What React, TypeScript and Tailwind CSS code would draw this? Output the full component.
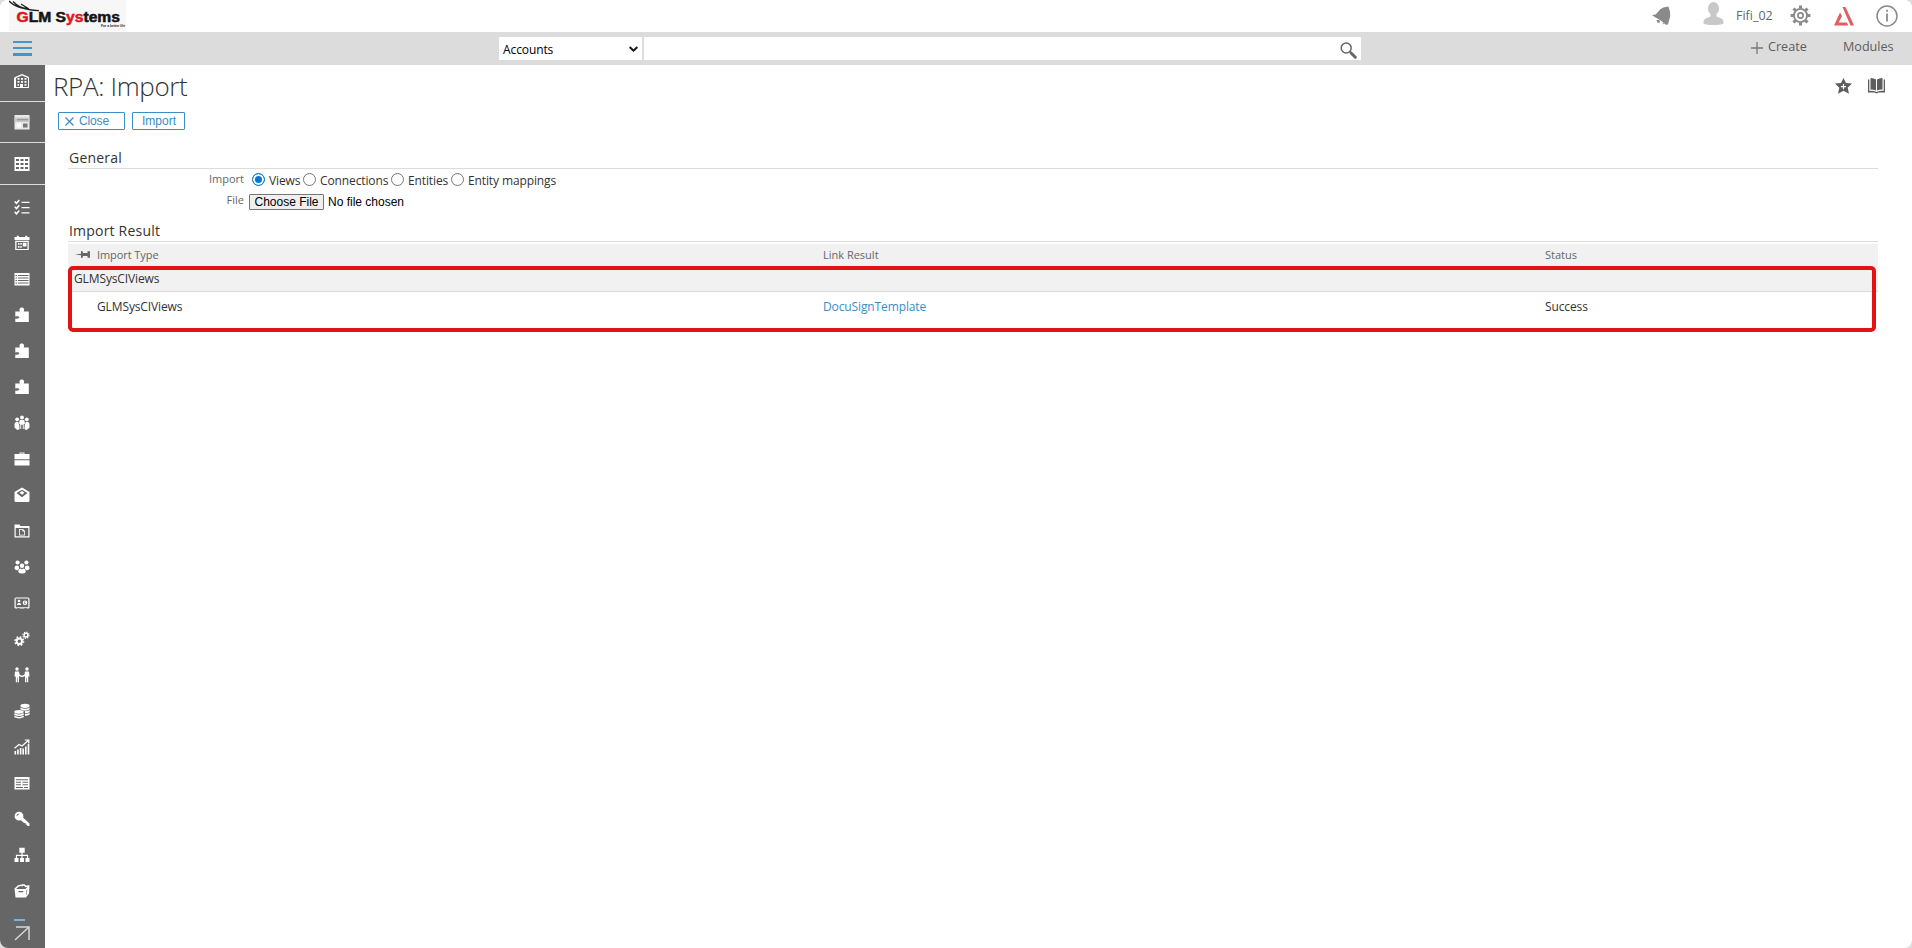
import { useState, ReactNode } from "react";

type IconProps = { children: ReactNode };

function SideIcon({ children }: IconProps) {
  return (
    <svg className="h-4 w-4 shrink-0 text-white" viewBox="0 0 16 16" fill="currentColor">
      {children}
    </svg>
  );
}

const puzzle = (
  <path d="M1.300 4.500h4.700c-1-1.500-.5-4 1.800-4s2.800 2.500 1.800 4h5.200V15H1.300v-3.600c1.500.8 4 .2 4-1.100S2.800 8.800 1.300 9.600z" />
);

// First three entries sit in their own separated cells
const topItems: { name: string; cell: string; icon: ReactNode }[] = [
  {
    name: "Building",
    cell: "h-[37px] pt-[8px]",
    icon: (
      <path
        fillRule="evenodd"
        d="M1 4l7-3 7 3v11H0V5zM2 5v9h4v-3h3v3h5V5L8 2.400zM3.500 5h2v1.700h-2zM7 5h2v1.700H7zM10.500 5h2v1.700h-2zM3.500 8h2v1.700h-2zM7 8h2v1.700H7zM10.500 8h2v1.700h-2zM3.500 11h1.500v1.700H3.500zM10.500 11h2v1.700h-2z"
      />
    ),
  },
  {
    name: "Dashboard",
    cell: "h-[41px] pt-[12px]",
    icon: (
      <>
        <path d="M0.500 1h15v14.500H.5z" fill="#e9e9e9" />
        <path d="M.5 3.500h15v4.500H.5z" fill="#c9c9c9" />
        <path d="M3 5.200h11v1H3z" fill="#888" />
        <path d="M2.500 9.500h4.500v4H2.500z" fill="#fff" />
        <path d="M9 9.500h4.500v4H9z" fill="#777" />
      </>
    ),
  },
  {
    name: "Grid",
    cell: "h-[42px] pt-[13px]",
    icon: (
      <path
        fillRule="evenodd"
        d="M.5 1h15v14H.5zM2 3v2h3V3zM6.500 3v2h3V3zM11 3v2h3V3zM2 7v2h3V7zM6.500 7v2h3V7zM11 7v2h3V7zM2 11v2h3v-2zM6.500 11v2h3v-2zM11 11v2h3v-2z"
      />
    ),
  },
];

const items: { name: string; icon: ReactNode }[] = [
  {
    name: "Tasks",
    icon: (
      <>
        <path
          d="M.7 2.500l1.800 1.800L5.300 1M.7 7.700l1.800 1.800 2.800-3.300M.7 12.900l1.800 1.800 2.800-3.300"
          fill="none"
          stroke="currentColor"
          strokeWidth="1.600"
        />
        <path d="M7.500 2.800h8v1.300h-8zM7.500 8h8v1.300h-8zM7.500 13.200h8v1.300h-8z" />
      </>
    ),
  },
  {
    name: "Calendar",
    icon: (
      <path
        fillRule="evenodd"
        d="M.5 2h2.300V.7h2V2h6.400V.7h2V2h2.300v3H.5zM1.200 5.800h13.600V15H1.200zM2.500 6.900v7h11v-7zM4 8h1.500v1.800H4zM6.300 8h1.500v1.800H6.300zM8.800 7.800h3.700v3.700H8.800zM4 11h1.500v1.800H4zM6.300 11h1.500v1.800H6.300z"
      />
    ),
  },
  {
    name: "List",
    icon: (
      <path
        fillRule="evenodd"
        d="M.5 2h15v12.500H.5zM1.500 4v1h1.500V4zM4 4v1h10.500V4zM1.500 6.500v1h1.500v-1zM4 6.500v1h10.500v-1zM1.500 9v1h1.500V9zM4 9v1h10.500V9zM1.500 11.500v1h1.500v-1zM4 11.500v1h10.500v-1z"
      />
    ),
  },
  { name: "Add-on 1", icon: puzzle },
  { name: "Add-on 2", icon: puzzle },
  { name: "Add-on 3", icon: puzzle },
  {
    name: "Team",
    icon: (
      <>
        <circle cx="8" cy="2.500" r="1.900" />
        <circle cx="3.200" cy="4.300" r="1.900" />
        <circle cx="12.800" cy="4.300" r="1.900" />
        <path d="M5.800 5h4.400l.8 3.500-1.300 1V14H8.800V9.800H7.200V14H6.300V9.500L5 8.500z" />
        <path d="M.5 8.800L2 6.800l2.300.2L5.300 10l.2 4.200-2.300.9L.5 12.500zM15.500 8.800L14 6.800l-2.300.2L10.700 10l-.2 4.200 2.300.9 2.700-2.600z" />
      </>
    ),
  },
  {
    name: "Briefcase",
    icon: (
      <path
        fillRule="evenodd"
        d="M.5 3h5V1.500h5V3h5v5.300H.5zM6.500 2.400V3h3v-.6zM.5 9.300h15v5.200H.5z"
      />
    ),
  },
  {
    name: "Mail",
    icon: (
      <path
        fillRule="evenodd"
        d="M8 .5l7.500 4.500v8.500q0 1.500-1.500 1.500H2q-1.500 0-1.500-1.500V5zM2.500 6L8 10.200 13.500 6 8 2.700zM5.500 5.800L8 4l2.500 1.800L8 7.800z"
      />
    ),
  },
  {
    name: "Folder",
    icon: (
      <path
        fillRule="evenodd"
        d="M.5 1.500h5l1 1.500h9v11.500H.5zM1.700 5v8.300h12.600V5zM5 6h4l2 2v4.500H5zM5.800 6.800v4.900h4.400V8.600H8.400V6.800z"
      />
    ),
  },
  {
    name: "Group",
    icon: (
      <>
        <circle cx="3.600" cy="3.500" r="2.100" />
        <circle cx="12.400" cy="3.500" r="2.100" />
        <circle cx="8" cy="6.700" r="2.200" />
        <path d="M.5 9.500Q.5 6.500 3 6.500l2 1v2.500q-.8.500-1.200 1.200Q1 11.500.5 9.500zM15.500 9.500q0-3-2.500-3l-2 1v2.500q.8.500 1.200 1.200 2.800.3 3.300-1.700zM4.300 13q0-3.500 2.500-3.500L8 10.500l1.200-1q2.500 0 2.500 3.500Q11 14.500 8 14.500T4.300 13z" />
      </>
    ),
  },
  {
    name: "Contact card",
    icon: (
      <>
        <path
          fillRule="evenodd"
          d="M2 2.500h12q1.500 0 1.500 1.500v8.500q0 1-1.500 1h-1.500V13h-2v.5h-5V13h-2v.5H2q-1.500 0-1.500-1V4q0-1.500 1.500-1.500zM1.700 3.600v8.700h12.600V3.600z"
        />
        <circle cx="5" cy="6" r="1.300" />
        <path d="M2.800 10q.2-2 2.200-2.300Q7 8 7.200 10z" />
        <circle
          cx="11"
          cy="7.700"
          r="1.700"
          fill="none"
          stroke="currentColor"
          strokeWidth="1.200"
        />
        <circle cx="11.300" cy="7.500" r=".7" />
      </>
    ),
  },
  {
    name: "Settings",
    icon: (
      <g fill="none" stroke="currentColor">
        <circle cx="5.300" cy="10.200" r="2.700" strokeWidth="2" />
        <circle
          cx="5.300"
          cy="10.200"
          r="4.300"
          strokeWidth="1.500"
          strokeDasharray="1.700 1.680"
        />
        <circle cx="12" cy="4.200" r="1.900" strokeWidth="1.500" />
        <circle
          cx="12"
          cy="4.200"
          r="3.100"
          strokeWidth="1.200"
          strokeDasharray="1.200 1.230"
        />
      </g>
    ),
  },
  {
    name: "Handshake",
    icon: (
      <>
        <circle cx="3" cy="2" r="1.700" />
        <circle cx="13" cy="2" r="1.700" />
        <path d="M1 4.500h4l.5 3 2.500 1.200 2.500-1.200.5-3h4l.5 5h-1.300v5.700h-1.300v-4.500h-.6v4.500H11V9L8 10.300 5 9v6.200H3.700v-4.500h-.6v4.500H1.800V9.500H.5z" />
      </>
    ),
  },
  {
    name: "Finance",
    icon: (
      <>
        <ellipse cx="11" cy="2.800" rx="4.600" ry="2.100" />
        <path d="M6.400 4.500q4.600 2.400 9.200 0v1.800q-1.800 1.400-4.600 1.400T6.400 6.300zM11 8.300q3 0 4.600-1.200v1.800q-1.600 1.300-4.600 1.300zM11 10.900q3 0 4.600-1.200v1.800q-1.600 1.300-4.600 1.300z" />
        <ellipse cx="5" cy="8.800" rx="4.700" ry="1.900" />
        <path d="M.3 10.300q4.700 2.200 9.500 0V12q-4.800 2.200-9.500 0zM.3 12.800q4.700 2.200 9.500 0v1.500Q5 16.500.3 14.300z" />
      </>
    ),
  },
  {
    name: "Reports",
    icon: (
      <>
        <path d="M.5 12h1.600v3.500H.5zM3.100 10.500h1.600v5H3.100zM5.800 9h1.600v6.500H5.800zM8.400 9.500H10v6H8.400zM11 7.500h1.600v8H11zM13.700 5h1.600v10.500h-1.600z" />
        <path
          d="M.5 9.300l4.500-3.800 3 1.500L14 1.800M10.800 1h4v3.500"
          fill="none"
          stroke="currentColor"
          strokeWidth="1.200"
        />
      </>
    ),
  },
  {
    name: "Form",
    icon: (
      <path
        fillRule="evenodd"
        d="M.5 2h15v12.500H.5zM2 4.200v1h12v-1zM2 6.800v1h5v-1zM8.500 6.800v1H14v-1zM2 9.300v1h5v-1zM8.500 9.300v1H14v-1zM2 12v1h7v-1zM10 12v1h4v-1z"
      />
    ),
  },
  {
    name: "Key",
    icon: (
      <>
        <path
          fillRule="evenodd"
          d="M5 .8a4.400 4.400 0 1 0 0 8.800A4.400 4.400 0 1 0 5 .8zM2.500 5q0-2.200 2.300-2.500v.9q-1.400.2-1.500 1.600z"
        />
        <path d="M9 6.500l6.500 6v2.500h-2.200l-.3-1.300-1.300-.2-.2-1.400-1.400-.2L6.500 9z" />
      </>
    ),
  },
  {
    name: "Hierarchy",
    icon: (
      <path d="M5.300.7h5.400v5H8.600v2.100h5.500v3.200h1.400v4h-4v-4h1.500V9H8.600v2H10v4H6v-4h1.400V9H3v2h1.500v4h-4v-4h1.400V7.800h5.500V5.700H5.300z" />
    ),
  },
  {
    name: "Archive",
    icon: (
      <path
        fillRule="evenodd"
        d="M.5 5.500L4 2.300l6-1.300L12 2.500l3.500-.3L15 10.500 12 14.500H1.500zM2.200 6h9.300l2-2-2.200.3L9.800 2.600 7 4l1-1.200L4.800 3.500zM4.500 8v1.200h4.800V8zM12.500 7l-.3 5 .6-.8.5-5z"
      />
    ),
  },
];

function Logo() {
  return (
    <svg
      className="block w-[117px] h-[32px]"
      viewBox="0 0 117 32"
      aria-label="GLM Systems"
    >
      <rect width="117" height="31" fill="#f7f7f7" />
      <path
        d="M0 1Q7 9 30 10.700M4 1.500Q10 8 18 8.500M12 4l8 5"
        fill="none"
        stroke="#222"
        strokeWidth="1.300"
      />
      <text
        x="7.500"
        y="22"
        textLength="103.500"
        lengthAdjust="spacingAndGlyphs"
        fontFamily="Liberation Sans, sans-serif"
        fontWeight="700"
        fontSize="14"
        strokeWidth=".5"
        stroke="#151515"
        fill="#151515"
      >
        <tspan fill="#e0161c" stroke="#e0161c">
          G
        </tspan>
        LM S
        <tspan fill="#e0161c" stroke="#e0161c">
          ys
        </tspan>
        tems
      </text>
      <text
        x="92"
        y="27"
        textLength="24"
        lengthAdjust="spacingAndGlyphs"
        fontFamily="Liberation Sans, sans-serif"
        fontWeight="700"
        fontSize="3.500"
        fill="#222"
      >
        For a better life
      </text>
    </svg>
  );
}

function TopBar() {
  return (
    <header className="flex h-8 shrink-0 bg-white pl-[9px]">
      <Logo />
      <div className="ml-auto flex h-8 text-[#8a8a8a]">
        <svg className="mt-[6px] w-[19px] h-[20px]" viewBox="0 0 19 20" fill="currentColor">
          <path d="M0 9.300L4 8.300 8 3.500Q11 .8 15.300.8L16 .2l.6 1Q19.500 8 17.300 13.500L16 18.500l-2.200.2-5-4.200L4 11.800z" />
          <path d="M4.300 14h3l1 2.300-2.500.8zM10.500 17l1.500.3-.5 1.200z" />
        </svg>
        <svg className="ml-[32px] mt-[2px] w-[21px] h-[24px]" viewBox="0 0 21 24" fill="#c8c8c8">
          <ellipse cx="10.500" cy="6.500" rx="5.600" ry="6.500" />
          <path d="M7.500 11h6v3.500l5 2q2 1 2 3.500v1.500q-3 1.500-10 1.500T.5 21.500V20q0-2.500 2-3.500l5-2z" />
        </svg>
        <span className="ml-[12px] mt-[8px] w-[38px] whitespace-nowrap text-[12.500px] leading-4 text-[#666]">
          Fifi_02
        </span>
        <svg
          className="ml-[16px] mt-[5px] mr-[1px] w-[21px] h-[21px]"
          viewBox="0 0 21 21"
          fill="none"
          stroke="currentColor"
        >
          <circle cx="10.500" cy="10.500" r="6.600" strokeWidth="1.900" />
          <circle cx="10.500" cy="10.500" r="2.600" strokeWidth="1.700" />
          <path
            strokeWidth="3"
            d="M10.500.6v3M10.500 17.400v3M.6 10.500h3M17.400 10.500h3M3.500 3.500l2.100 2.100M15.400 15.400l2.100 2.100M3.500 17.500l2.100-2.100M15.400 5.600l2.100-2.100"
          />
        </svg>
        <svg className="ml-[22px] mt-[7px] w-[20px] h-[19px]" viewBox="0 0 20 19" fill="#e25c62">
          <path d="M8.500 0h3L20 18.500h-3.500z" />
          <path d="M6 5.500L8 9l-3.300 6.500h8.200l1.400 3H0z" />
        </svg>
        <svg
          className="ml-[22px] mr-[14px] mt-[5px] w-[22px] h-[22px]"
          viewBox="0 0 22 22"
          fill="none"
          stroke="currentColor"
        >
          <circle cx="11" cy="11" r="10" strokeWidth="1.500" />
          <path d="M11 8.500v8M11 4.800v2" strokeWidth="1.800" />
        </svg>
      </div>
    </header>
  );
}

function SearchBar() {
  return (
    <div className="flex h-[33px] shrink-0 bg-[#dcdcdc]">
      <button className="ml-[13px] mt-[9px] flex h-[15px] w-[19px] flex-col justify-between">
        <span className="h-[2px] w-full bg-[#4495c8]" />
        <span className="h-[2px] w-full bg-[#4495c8]" />
        <span className="h-[3px] w-full bg-[#4495c8]" />
      </button>
      <button className="ml-[467px] mt-[5px] flex h-[23px] w-[143px] items-center justify-between bg-white pl-1 pr-[4px] text-[12px] tracking-[-0.1px] text-black">
        <span className="mt-[2px]">Accounts</span>
        <svg className="h-[6px] w-[9px]" viewBox="0 0 9 6" fill="none" stroke="#111">
          <path d="M.7 1l3.800 3.600L8.300 1" strokeWidth="1.900" />
        </svg>
      </button>
      <div className="ml-[2px] mt-[5px] flex h-[23px] w-[717px] justify-end bg-white pr-[4px] pt-[5px]">
        <svg className="h-[17px] w-[17px]" viewBox="0 0 17 17" fill="none" stroke="#666">
          <circle cx="6.200" cy="6" r="5" strokeWidth="1.500" />
          <path d="M9.800 9.600l2 2" strokeWidth="1.500" />
          <path d="M11.300 11.200l4 4" strokeWidth="3" strokeLinecap="round" />
        </svg>
      </div>
      <div className="ml-auto flex pt-[7px] text-[12.600px] leading-4 text-[#5c5c5c]">
        <svg className="mt-[3px] h-[12px] w-[12px]" viewBox="0 0 12 12" stroke="#777">
          <path d="M6 0v12M0 6h12" strokeWidth="1.300" />
        </svg>
        <span className="ml-[5px] w-[75px]">Create</span>
        <span className="w-[69px]">Modules</span>
      </div>
    </div>
  );
}

function Sidebar() {
  return (
    <nav className="w-[45px] shrink-0 bg-[#666]">
      {topItems.map((item) => (
        <div
          key={item.name}
          title={item.name}
          className={`border-b border-[#dedede] pl-[14px] ${item.cell}`}
        >
          <SideIcon>{item.icon}</SideIcon>
        </div>
      ))}
      <div className="flex flex-col gap-5 pl-[14px] pt-[14px]">
        {items.map((item) => (
          <SideIcon key={item.name}>{item.icon}</SideIcon>
        ))}
      </div>
      <div className="ml-[14px] mt-[20px] h-[2px] w-[11px] bg-[#7eb1dc]" />
      <svg
        className="ml-[14px] mt-[5px] h-[15px] w-[16px]"
        viewBox="0 0 16 15"
        fill="none"
        stroke="#d6d6d6"
        strokeWidth="1.500"
      >
        <path d="M2 1h13v13M15 1L1 14" />
      </svg>
    </nav>
  );
}

const importTypes = [
  { label: "Views", width: "w-[51px]" },
  { label: "Connections", width: "w-[88px]" },
  { label: "Entities", width: "w-[60px]" },
  { label: "Entity mappings", width: "w-[110px]" },
];

function GeneralSection() {
  const [selected, setSelected] = useState("Views");

  return (
    <section>
      <h2 className="border-b border-[#dcdcdc] pl-[1px] text-[14px] leading-5 tracking-[0.200px]">
        General
      </h2>
      <div className="flex pt-[2px] text-[12px] leading-4">
        <div className="w-[176px] shrink-0 text-right text-[11px] text-[#666]">Import</div>
        <div className="ml-[8px] flex">
          {importTypes.map((type) => (
            <label
              key={type.label}
              className={`flex shrink-0 whitespace-nowrap tracking-[-0.120px] ${type.width}`}
            >
              <input
                type="radio"
                name="importType"
                checked={selected === type.label}
                onChange={() => setSelected(type.label)}
                className="mr-[4px] mt-[2px] h-[13px] w-[13px] shrink-0 appearance-none rounded-full border border-[#767676] bg-white checked:border-[#0078d7] checked:bg-[#0078d7] checked:shadow-[inset_0_0_0_2px_#fff]"
              />
              <span className="pt-[2px]">{type.label}</span>
            </label>
          ))}
        </div>
      </div>
      <div className="flex pt-[3px] text-[12px] leading-4">
        <div className="w-[176px] shrink-0 text-right text-[11px] text-[#666]">File</div>
        <div className="ml-[5px] mt-[2px] flex font-['Liberation_Sans',sans-serif] text-black">
          <button className="h-[16px] w-[75px] rounded-[1px] border border-[#767676] bg-[#efefef] text-[12px] leading-[15px]">
            Choose File
          </button>
          <span className="ml-1">No file chosen</span>
        </div>
      </div>
    </section>
  );
}

function ResultSection() {
  return (
    <section className="mt-[11px]">
      <h2 className="border-b border-[#dcdcdc] pl-[1px] text-[14px] leading-5 tracking-[0.200px]">
        Import Result
      </h2>
      <div className="relative mt-[2px] text-[12px] tracking-[-0.120px]">
        <div className="flex h-[24px] bg-[#f1f1f1] pt-[3px] text-[11px] leading-4 tracking-normal text-[#666]">
          <svg className="ml-[7px] mt-[3px] h-[9px] w-[16px]" viewBox="0 0 16 9" fill="#666">
            <path d="M0 4.500L6 3.800V1h1.200l1 2H12.500V1.300H15v6.400h-2.500V6H8.200l-1 2H6V5.200z" />
          </svg>
          <span className="ml-[6px] w-[726px] tracking-[-0.080px]">Import Type</span>
          <span className="w-[722px]">Link Result</span>
          <span>Status</span>
        </div>
        <div className="h-[24px] border-b border-[#d8d8d8] bg-[#f1f1f1] pl-[6px] pt-[3px] leading-4">
          GLMSysCIViews
        </div>
        <div className="flex pl-[29px] pt-[7px] leading-4">
          <span className="w-[726px]">GLMSysCIViews</span>
          <a className="w-[722px] text-[#3a8dc8]">DocuSignTemplate</a>
          <span>Success</span>
        </div>
        {/* Highlight frame around the imported rows */}
        <div className="absolute left-0 top-[22px] h-[66px] w-[1808px] rounded-[5px] border-4 border-[#e31313]" />
      </div>
    </section>
  );
}

export default function App() {
  return (
    <div className="h-[948px] w-[1912px] bg-[#dedede] font-['Open_Sans',sans-serif] text-[#333]">
      <div className="flex h-full flex-col overflow-hidden rounded-[8px] bg-white">
        <TopBar />
        <SearchBar />
        <div className="flex min-h-0 flex-1">
          <Sidebar />
          <main className="flex-1">
            <div className="flex justify-between pl-[8px] pt-[3px]">
              <h1 className="text-[26px] font-light leading-9 tracking-[-0.350px] text-[#333]">
                RPA: Import
              </h1>
              <div className="flex pr-[27px] pt-[10px]">
                <svg className="h-[16px] w-[17px]" viewBox="0 0 17 16" fill="#5d5d5d">
                  <path
                    fillRule="evenodd"
                    d="M8.500 0l2.500 5 6 .5-4.300 4.300 1.300 6-5.500-3-5.500 3 1.300-6L0 5.500l6-.5zM7.900 6v2H5.900v1.200h2v2h1.200v-2h2V8h-2V6z"
                  />
                </svg>
                <svg className="ml-[16px] h-[16px] w-[17px]" viewBox="0 0 17 16" fill="#5d5d5d">
                  <path d="M2.500 0Q6 0 8 1.500v11Q6 11.500 2.500 11.500zM14.500 0Q11 0 9 1.500v11q2-1 5.500-1z" />
                  <path d="M0 1.500h1.300v11.300q5 0 7.200 1.200 2.200-1.200 7.200-1.200V1.500H17V14.500h-6.500l-1 .8h-2l-1-.8H0z" />
                </svg>
              </div>
            </div>
            <div className="flex pl-[13px] pt-[8px] font-['Liberation_Sans',sans-serif] text-[12px] text-[#3a8dc8]">
              <button className="flex h-[18px] w-[67px] items-center rounded-[1px] border border-[#3a8dc8] pl-[6px]">
                <svg className="mt-[1px] h-[9px] w-[9px]" viewBox="0 0 9 9" stroke="currentColor">
                  <path d="M.5.5l8 8M8.500.5l-8 8" strokeWidth="1.200" />
                </svg>
                <span className="ml-[5px] leading-4 tracking-[-0.150px]">Close</span>
              </button>
              <button className="ml-[7px] h-[18px] w-[53px] rounded-[1px] border border-[#3a8dc8] pl-[1px] leading-4">
                Import
              </button>
            </div>
            <div className="ml-[23px] w-[1810px] pt-[18px]">
              <GeneralSection />
              <ResultSection />
            </div>
          </main>
        </div>
      </div>
    </div>
  );
}
